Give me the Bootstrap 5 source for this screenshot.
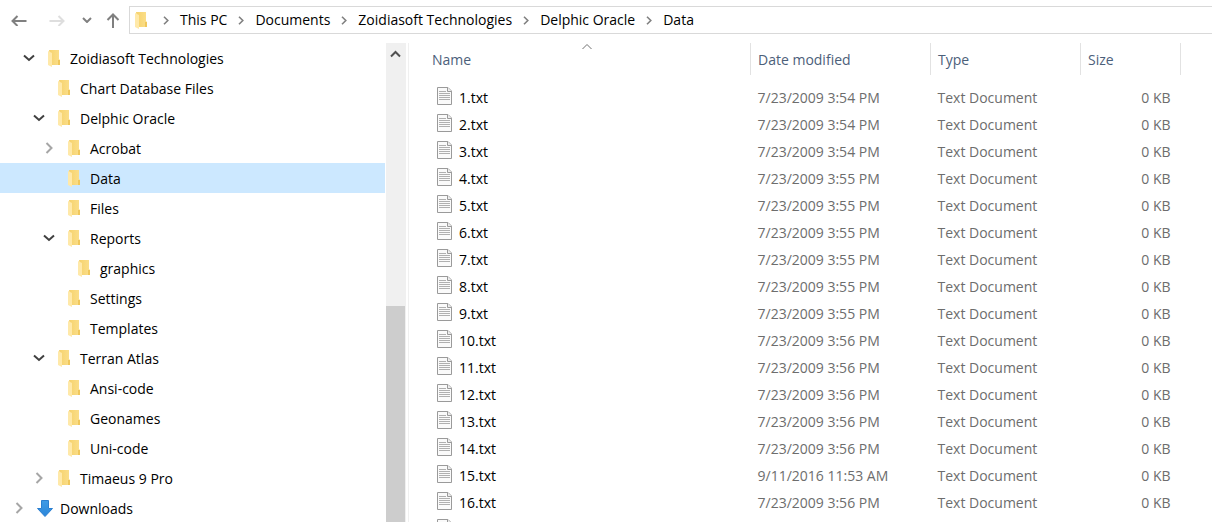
<!DOCTYPE html>
<html lang="en">
<head>
<meta charset="utf-8">
<meta name="viewport" content="width=device-width, initial-scale=1">
<title>Data</title>
<link rel="stylesheet" href="https://cdn.jsdelivr.net/npm/bootstrap@5.3.0/dist/css/bootstrap.min.css">
<style>
body { font-family: "Open Sans", "Noto Sans", sans-serif; font-size: 14px; line-height: 20px; color: #000; }
svg { display: block; flex: none; }
.tool { border: 0; background: none; padding: 0; display: flex; align-items: center; justify-content: center; flex: none; }
.toolbar { padding: 6px 0 9px 9px; }
.tool-arrow { width: 20px; margin-right: 18px; }
.tool-recent { width: 22px; margin-left: -9px; }
.tool-up { width: 20px; margin-left: 5px; }
.address { height: 28px; border: 1px solid #d9d9d9; border-right: 0; padding-left: 5px; margin-left: 6px; }
.crumb-sep { width: 28px; display: flex; justify-content: center; }
.address a, .tree a { color: inherit; text-decoration: none; white-space: nowrap; }
.tree a { padding-top: 2px; }
.sidebar { width: 386px; flex: none; border-right: 1px solid #fff; }
.tree-row { height: 30px; display: flex; align-items: center; }
.tree-row.selected { background: #cce8ff; }
.twisty { width: 18px; height: 18px; margin-right: 8px; }
.tree-icon { width: 18px; margin-right: 6px; display: flex; justify-content: center; }
.lvl-0 { padding-left: 10px; } .lvl-1 { padding-left: 20px; } .lvl-2 { padding-left: 30px; }
.lvl-3 { padding-left: 40px; } .lvl-4 { padding-left: 50px; }
.scroller { width: 20px; flex: none; background: #f0f0f0; }
.scroller .tool { height: 22px; width: 19px; }
.thumb { width: 19px; background: #cdcdcd; margin-top: 241px; }
.files { border-left: 1px solid #f0f0f0; margin-left: 2px; padding: 0 31px 0 15px; }
.file-table { width: 100%; table-layout: fixed; border-collapse: collapse; color: #6d6d6d; }
.file-table th { height: 32px; padding: 2px 7px 0; font-weight: 400; color: #4c607a; border-right: 1px solid #e2e2e2; position: relative; }
.file-table tbody::before { content: ""; display: block; height: 9px; }
.file-table td { height: 27px; padding: 0 7px; white-space: nowrap; }
.file-table th:first-child, .file-table td:first-child { padding-left: 8px; }
.file-table td:first-child { color: #000; }
.file-table td:last-child { text-align: right; padding-right: 10px; }
.file-table td svg { margin: 0 7px 3px 5px; }
.sort-mark { position: absolute; top: 0; left: 50%; transform: translateX(-50%); }
.col-date { width: 180px; } .col-type { width: 150px; } .col-size { width: 100px; }
</style>
</head>
<body class="bg-white vh-100 overflow-hidden d-flex flex-column">
<svg width="0" height="0" class="position-absolute" aria-hidden="true">
  <defs>
    <linearGradient id="gold" x1="0" x2="1"><stop offset="0" stop-color="#f6d26c"/><stop offset="1" stop-color="#fbdf8b"/></linearGradient>
    <linearGradient id="blue" x1="0" y1="0" x2="0" y2="1"><stop offset="0" stop-color="#3f9be6"/><stop offset="1" stop-color="#2b86d9"/></linearGradient>
  </defs>
  <symbol id="folder" viewBox="0 0 13 17" preserveAspectRatio="xMinYMin meet"><path d="M1 0h10v9l1 1v5H3z" fill="url(#gold)"/><path d="M10 10h2v5h-2z" fill="#f0c75c"/><path d="M0 1l4 2v14l-4-2z" fill="#ffe9a9"/></symbol>
  <symbol id="text-file" viewBox="0 0 15 18"><path d="M.5.5h10.500l3.500 3.500v13.500H.5z" fill="#fafafa" stroke="#9a9a9a"/><path d="M10.500.5v4h4" fill="#eee" stroke="#9a9a9a"/><path d="M2 4.500h7M2 6.500h11M2 8.500h11M2 10.500h11M2 12.500h11" stroke="#b0b0b0"/></symbol>
  <symbol id="open" viewBox="0 0 12 8"><path d="M1 1.500l5 4.500 5-4.500" fill="none" stroke="#404040" stroke-width="2"/></symbol>
  <symbol id="closed" viewBox="0 0 8 12"><path d="M1.500 1l5 5-5 5" fill="none" stroke="#a6a6a6" stroke-width="2"/></symbol>
  <symbol id="sep" viewBox="0 0 6 9"><path d="M1 .7l3.800 3.800L1 8.300" fill="none" stroke="#808080" stroke-width="1.600"/></symbol>
</svg>

<header class="toolbar d-flex align-items-center">
  <button class="tool tool-arrow" type="button" aria-label="Back"><svg width="16" height="12" fill="none" stroke="#808080" stroke-width="2"><path d="M15.500 7H1.500M6.500 2l-5 5 5 5"/></svg></button>
  <button class="tool tool-arrow" type="button" aria-label="Forward" disabled><svg width="16" height="12" fill="none" stroke="#dedede" stroke-width="2"><path d="M.5 7h14M9.500 2l5 5-5 5"/></svg></button>
  <button class="tool tool-recent" type="button" aria-label="Recent locations"><svg width="10" height="6" fill="none" stroke="#808080" stroke-width="2"><path d="M1 1l4 4 4-4"/></svg></button>
  <button class="tool tool-up" type="button" aria-label="Up"><svg width="14" height="16" fill="none" stroke="#808080" stroke-width="2"><path d="M7 16V3M1.500 8L7 2.500 12.500 8"/></svg></button>
  <nav class="address d-flex align-items-center flex-grow-1" aria-label="Address">
    <svg width="13" height="17"><use href="#folder"/></svg>
    <span class="crumb-sep ms-1"><svg width="6" height="9"><use href="#sep"/></svg></span><a href="#">This PC</a>
    <span class="crumb-sep"><svg width="6" height="9"><use href="#sep"/></svg></span><a href="#">Documents</a>
    <span class="crumb-sep"><svg width="6" height="9"><use href="#sep"/></svg></span><a href="#">Zoidiasoft Technologies</a>
    <span class="crumb-sep"><svg width="6" height="9"><use href="#sep"/></svg></span><a href="#">Delphic Oracle</a>
    <span class="crumb-sep"><svg width="6" height="9"><use href="#sep"/></svg></span><a href="#">Data</a>
  </nav>
</header>

<div class="d-flex flex-grow-1 overflow-hidden">
  <nav class="sidebar" aria-label="Folders">
    <ul class="tree list-unstyled mb-0">
      <li class="tree-row lvl-1"><button class="tool twisty" type="button" aria-label="Collapse"><svg width="12" height="8"><use href="#open"/></svg></button><span class="tree-icon"><svg width="14" height="17"><use href="#folder"/></svg></span><a href="#">Zoidiasoft Technologies</a></li>
      <li class="tree-row lvl-2"><span class="twisty"></span><span class="tree-icon"><svg width="14" height="17"><use href="#folder"/></svg></span><a href="#">Chart Database Files</a></li>
      <li class="tree-row lvl-2"><button class="tool twisty" type="button" aria-label="Collapse"><svg width="12" height="8"><use href="#open"/></svg></button><span class="tree-icon"><svg width="14" height="17"><use href="#folder"/></svg></span><a href="#">Delphic Oracle</a></li>
      <li class="tree-row lvl-3"><button class="tool twisty" type="button" aria-label="Expand"><svg width="8" height="12"><use href="#closed"/></svg></button><span class="tree-icon"><svg width="14" height="17"><use href="#folder"/></svg></span><a href="#">Acrobat</a></li>
      <li class="tree-row lvl-3 selected"><span class="twisty"></span><span class="tree-icon"><svg width="14" height="17"><use href="#folder"/></svg></span><a href="#" aria-current="page">Data</a></li>
      <li class="tree-row lvl-3"><span class="twisty"></span><span class="tree-icon"><svg width="14" height="17"><use href="#folder"/></svg></span><a href="#">Files</a></li>
      <li class="tree-row lvl-3"><button class="tool twisty" type="button" aria-label="Collapse"><svg width="12" height="8"><use href="#open"/></svg></button><span class="tree-icon"><svg width="14" height="17"><use href="#folder"/></svg></span><a href="#">Reports</a></li>
      <li class="tree-row lvl-4"><span class="twisty"></span><span class="tree-icon"><svg width="14" height="17"><use href="#folder"/></svg></span><a href="#">graphics</a></li>
      <li class="tree-row lvl-3"><span class="twisty"></span><span class="tree-icon"><svg width="14" height="17"><use href="#folder"/></svg></span><a href="#">Settings</a></li>
      <li class="tree-row lvl-3"><span class="twisty"></span><span class="tree-icon"><svg width="14" height="17"><use href="#folder"/></svg></span><a href="#">Templates</a></li>
      <li class="tree-row lvl-2"><button class="tool twisty" type="button" aria-label="Collapse"><svg width="12" height="8"><use href="#open"/></svg></button><span class="tree-icon"><svg width="14" height="17"><use href="#folder"/></svg></span><a href="#">Terran Atlas</a></li>
      <li class="tree-row lvl-3"><span class="twisty"></span><span class="tree-icon"><svg width="14" height="17"><use href="#folder"/></svg></span><a href="#">Ansi-code</a></li>
      <li class="tree-row lvl-3"><span class="twisty"></span><span class="tree-icon"><svg width="14" height="17"><use href="#folder"/></svg></span><a href="#">Geonames</a></li>
      <li class="tree-row lvl-3"><span class="twisty"></span><span class="tree-icon"><svg width="14" height="17"><use href="#folder"/></svg></span><a href="#">Uni-code</a></li>
      <li class="tree-row lvl-2"><button class="tool twisty" type="button" aria-label="Expand"><svg width="8" height="12"><use href="#closed"/></svg></button><span class="tree-icon"><svg width="14" height="17"><use href="#folder"/></svg></span><a href="#">Timaeus 9 Pro</a></li>
      <li class="tree-row lvl-0"><button class="tool twisty" type="button" aria-label="Expand"><svg width="8" height="12"><use href="#closed"/></svg></button><span class="tree-icon"><svg width="18" height="17" viewBox="0 0 18 17"><path d="M5.500.5h7v8h4L9 16.500 1.500 8.500h4z" fill="url(#blue)" stroke="#2b7fd0"/></svg></span><a href="#">Downloads</a></li>
    </ul>
  </nav>
  <div class="scroller d-flex flex-column">
    <button class="tool" type="button" aria-label="Scroll up"><svg width="11" height="8" fill="none" stroke="#505050" stroke-width="2"><path d="M1 6.500L5.500 2 10 6.500"/></svg></button>
    <div class="thumb flex-grow-1"></div>
  </div>
  <main class="files flex-grow-1 overflow-hidden">
    <table class="file-table">
      <colgroup><col><col class="col-date"><col class="col-type"><col class="col-size"></colgroup>
      <thead><tr><th>Name<svg class="sort-mark" width="11" height="7" fill="none" stroke="#707070"><path d="M1 6l4.500-4.500L10 6"/></svg></th><th>Date modified</th><th>Type</th><th>Size</th></tr></thead>
      <tbody id="rows"></tbody>
    </table>
  </main>
</div>
<script>
const dates = ["7/23/2009 3:54 PM", "7/23/2009 3:54 PM", "7/23/2009 3:54 PM", "7/23/2009 3:55 PM", "7/23/2009 3:55 PM",
  "7/23/2009 3:55 PM", "7/23/2009 3:55 PM", "7/23/2009 3:55 PM", "7/23/2009 3:55 PM", "7/23/2009 3:56 PM", "7/23/2009 3:56 PM",
  "7/23/2009 3:56 PM", "7/23/2009 3:56 PM", "7/23/2009 3:56 PM", "9/11/2016 11:53 AM", "7/23/2009 3:56 PM", "7/23/2009 3:56 PM"];
document.getElementById("rows").innerHTML = dates.map((date, i) =>
  `<tr><td><div class="d-flex align-items-center"><svg width="15" height="18"><use href="#text-file"/></svg>${i + 1}.txt</div></td><td>${date}</td><td>Text Document</td><td>0 KB</td></tr>`).join("");
</script>
<script src="https://cdn.jsdelivr.net/npm/bootstrap@5.3.0/dist/js/bootstrap.bundle.min.js"></script>
</body>
</html>
